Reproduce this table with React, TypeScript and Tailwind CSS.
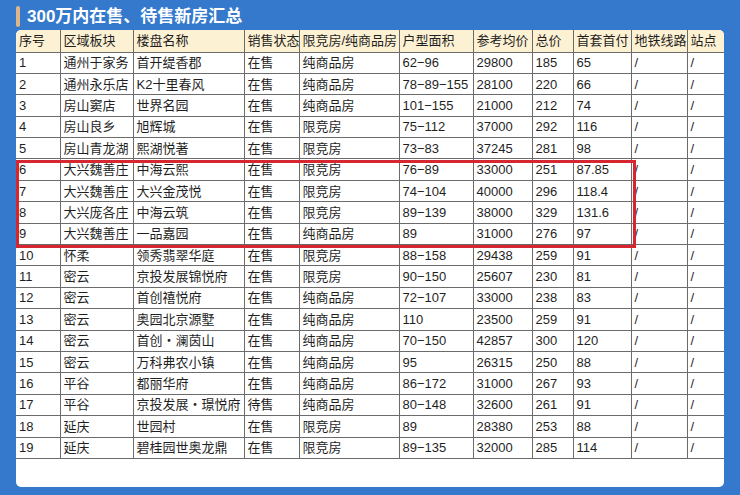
import React from "react"

const cols = [44, 73, 111, 55, 100, 74, 59, 41, 58, 56, 37]

const head = ["序号", "区域板块", "楼盘名称", "销售状态", "限竞房/纯商品房", "户型面积", "参考均价", "总价", "首套首付", "地铁线路", "站点"]

const rows: string[][] = [
["1", "通州于家务", "首开缇香郡", "在售", "纯商品房", "62−96", "29800", "185", "65"],
["2", "通州永乐店", "K2十里春风", "在售", "纯商品房", "78−89−155", "28100", "220", "66"],
["3", "房山窦店", "世界名园", "在售", "纯商品房", "101−155", "21000", "212", "74"],
["4", "房山良乡", "旭辉城", "在售", "限竞房", "75−112", "37000", "292", "116"],
["5", "房山青龙湖", "熙湖悦著", "在售", "限竞房", "73−83", "37245", "281", "98"],
["6", "大兴魏善庄", "中海云熙", "在售", "限竞房", "76−89", "33000", "251", "87.85"],
["7", "大兴魏善庄", "大兴金茂悦", "在售", "限竞房", "74−104", "40000", "296", "118.4"],
["8", "大兴庞各庄", "中海云筑", "在售", "限竞房", "89−139", "38000", "329", "131.6"],
["9", "大兴魏善庄", "一品嘉园", "在售", "纯商品房", "89", "31000", "276", "97"],
["10", "怀柔", "领秀翡翠华庭", "在售", "限竞房", "88−158", "29438", "259", "91"],
["11", "密云", "京投发展锦悦府", "在售", "限竞房", "90−150", "25607", "230", "81"],
["12", "密云", "首创禧悦府", "在售", "纯商品房", "72−107", "33000", "238", "83"],
["13", "密云", "奥园北京源墅", "在售", "纯商品房", "110", "23500", "259", "91"],
["14", "密云", "首创・澜茵山", "在售", "纯商品房", "70−150", "42857", "300", "120"],
["15", "密云", "万科弗农小镇", "在售", "纯商品房", "95", "26315", "250", "88"],
["16", "平谷", "都丽华府", "在售", "纯商品房", "86−172", "31000", "267", "93"],
["17", "平谷", "京投发展・璟悦府", "待售", "纯商品房", "80−148", "32600", "261", "91"],
["18", "延庆", "世园村", "在售", "限竞房", "89", "28380", "253", "88"],
["19", "延庆", "碧桂园世奥龙鼎", "在售", "限竞房", "89−135", "32000", "285", "114"],
]

export default function App() {
return (
<div
className="w-[740px] h-[495px] bg-[#3479cc] overflow-hidden relative"
style={{ fontFamily: '"Liberation Sans", "Noto Sans CJK SC", sans-serif' }}
>
<div className="h-[30px] flex items-center pl-4 gap-[7px] pt-[2px]">
<div className="w-[4px] h-[21px] rounded-full bg-[#dcb58a]" />
<div className="text-white text-[17px] font-semibold leading-none">300万内在售、待售新房汇总</div>
</div>

<div className="ml-4 w-[708px] h-[457px] bg-white rounded-[5px] overflow-hidden">
<table className="table-fixed border-collapse text-[13px] text-[#1f1f1f] w-[708px]">
<colgroup>
{cols.map((w, i) => (
<col key={i} style={{ width: w }} />
))}
</colgroup>
<thead>
<tr className="h-[22px] bg-[#fdf1d3]">
{head.map((h, i) => (
<th key={i} className="border border-[#6b6b6b] border-t-0 first:border-l-0 last:border-r-0 font-normal text-left pl-[3px] whitespace-nowrap overflow-hidden leading-none">
{h}
</th>
))}
</tr>
</thead>
<tbody>
{rows.map((r, ri) => (
<tr key={ri} className="h-[21.4px]">
{[...r, "/", "/"].map((c, ci) => (
<td key={ci} className="border border-[#6b6b6b] first:border-l-0 last:border-r-0 pl-[3px] whitespace-nowrap overflow-hidden leading-none">
{c}
</td>
))}
</tr>
))}
</tbody>
</table>
</div>

{/* highlight box */}
<div className="absolute left-[16px] top-[160px] w-[620px] h-[88px] border-[3px] border-[#d6262f] pointer-events-none" />
</div>
)
}
